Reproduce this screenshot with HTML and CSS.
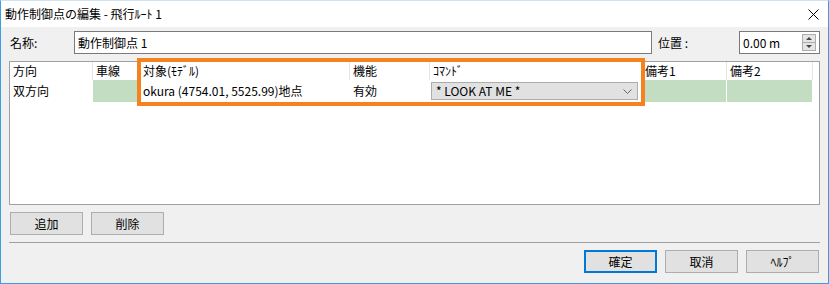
FILE: index.html
```html
<!DOCTYPE html>
<html lang="ja">

<head>
    <meta charset="UTF-8">
    <title>動作制御点の編集</title>
    <link rel="stylesheet" href="styles.css">
</head>

<body>
    <div class="window">
        <div class="titlebar">
            <span class="title">動作制御点の編集 - 飛行ﾙｰﾄ 1</span>
            <svg class="close" width="11" height="11" viewBox="0 0 11 11">
                <path d="M0.5 0.5 L10.5 10.5 M10.5 0.5 L0.5 10.5" stroke="#000" stroke-width="1" fill="none"/>
            </svg>
        </div>

        <div class="content">
            <!-- name / position -->
            <div class="name-row">
                <span class="label-name">名称:</span>
                <div class="textbox name-box">動作制御点 1</div>
                <span class="label-pos">位置 :</span>
                <div class="textbox spin-box">
                    <span>0.00 m</span>
                    <div class="spinner">
                        <div class="spin-up"><span class="tri-up"></span></div>
                        <div class="spin-down"><span class="tri-down"></span></div>
                    </div>
                </div>
            </div>

            <!-- list view -->
            <div class="list">
                <div class="list-row header">
                    <div class="cell">方向</div>
                    <div class="cell">車線</div>
                    <div class="cell">対象(ﾓﾃﾞﾙ)</div>
                    <div class="cell">機能</div>
                    <div class="cell">ｺﾏﾝﾄﾞ</div>
                    <div class="cell">備考1</div>
                    <div class="cell">備考2</div>
                    <div class="cell last"></div>
                </div>
                <div class="list-row data">
                    <div class="cell">双方向</div>
                    <div class="cell green"></div>
                    <div class="cell">okura (4754.01, 5525.99)地点</div>
                    <div class="cell">有効</div>
                    <div class="cell combo-cell">
                        <div class="combo">
                            <span>* LOOK AT ME *</span>
                            <svg width="9" height="5" viewBox="0 0 9 5">
                                <path d="M0.5 0.5 L4.5 4.5 L8.5 0.5" stroke="#666" stroke-width="1" fill="none"/>
                            </svg>
                        </div>
                    </div>
                    <div class="cell green"></div>
                    <div class="cell green"></div>
                    <div class="cell last"></div>
                </div>
                <div class="highlight"></div>
            </div>

            <div class="edit-buttons">
                <button class="btn">追加</button>
                <button class="btn">削除</button>
            </div>

            <div class="separator"></div>

            <div class="footer">
                <button class="btn default">確定</button>
                <button class="btn">取消</button>
                <button class="btn">ﾍﾙﾌﾟ</button>
            </div>
        </div>
    </div>
</body>

</html>
```

FILE: styles.css
```css
* {
    box-sizing: border-box;
}

body {
    margin: 0;
    padding: 0;
    font-family: "Noto Sans CJK JP", "Liberation Sans", sans-serif;
    font-size: 12px;
    color: #000;
}

.window {
    width: 829px;
    height: 284px;
    border: 1px solid #3c9ee0;
    border-top-color: #cfe3f3;
    background-color: #f0f0f0;
    overflow: hidden;
}

.titlebar {
    height: 26px;
    background-color: #fff;
    display: flex;
    align-items: center;
    justify-content: space-between;
    padding: 0 9px 0 4px;
}

.title {
    font-size: 12px;
    line-height: 16px;
}

.close {
    display: block;
    margin-top: 1px;
}

.content {
    padding: 4px 8px 0 8px;
}

.name-row {
    display: flex;
    align-items: center;
    height: 23px;
}

.label-name {
    width: 65px;
    padding-left: 1px;
}

.textbox {
    height: 23px;
    background-color: #fff;
    border: 1px solid #7a7a7a;
    display: flex;
    align-items: center;
    padding-left: 3px;
}

.name-box {
    width: 578px;
}

.label-pos {
    margin-left: 6px;
    width: 81px;
}

.spin-box {
    flex: 1;
    justify-content: space-between;
    padding-right: 3px;
}

.spinner {
    width: 14px;
    height: 17px;
    display: flex;
    flex-direction: column;
    border: 1px solid #adadad;
    background-color: #e5e5e5;
}

.spin-up, .spin-down {
    flex: 1;
    display: flex;
    align-items: center;
    justify-content: center;
}

.spin-up {
    border-bottom: 1px solid #adadad;
}

.tri-up {
    width: 0;
    height: 0;
    border-left: 3px solid transparent;
    border-right: 3px solid transparent;
    border-bottom: 3px solid #444;
}

.tri-down {
    width: 0;
    height: 0;
    border-left: 3px solid transparent;
    border-right: 3px solid transparent;
    border-top: 3px solid #444;
}

.list {
    position: relative;
    margin-top: 7px;
    height: 144px;
    background-color: #fff;
    border: 1px solid #a0a0a0;
}

.list-row {
    display: grid;
    grid-template-columns: 83px 47px 210px 80px 212px 85px 86px 1fr;
}

.list-row.header {
    height: 18px;
}

.list-row.header .cell {
    border-right: 1px solid #e5e5e5;
    padding-left: 3px;
    line-height: 18px;
}

.list-row.header .cell.last {
    border-right: none;
}

.list-row.data {
    height: 22px;
}

.list-row.data .cell {
    padding-left: 3px;
    line-height: 22px;
    border-right: 1px solid #fff;
}

.cell {
    white-space: nowrap;
    overflow: hidden;
}

.cell.green {
    background-color: #c2ddc2;
}

.list-row.data .combo-cell {
    padding: 2px 3px 2px 1px;
}

.combo {
    height: 18px;
    background-color: #e1e1e1;
    border: 1px solid #adadad;
    display: flex;
    align-items: center;
    justify-content: space-between;
    padding: 0 5px 0 4px;
    line-height: 16px;
}

.combo svg {
    display: block;
}

.highlight {
    position: absolute;
    left: 127px;
    top: -4px;
    width: 508px;
    height: 48px;
    border: 4px solid #f5821f;
}

.edit-buttons {
    display: flex;
    gap: 8px;
    margin-top: 7px;
    padding-left: 1px;
}

.btn {
    width: 73px;
    height: 23px;
    padding: 0;
    background-color: #e1e1e1;
    border: 1px solid #adadad;
    font-family: "Noto Sans CJK JP", "Liberation Sans", sans-serif;
    font-size: 12px;
    color: #000;
}

.btn.default {
    border: 2px solid #0078d7;
}

.separator {
    margin-top: 7px;
    height: 1px;
    background-color: #a0a0a0;
}

.footer {
    display: flex;
    justify-content: flex-end;
    gap: 8px;
    margin-top: 7px;
    padding-right: 1px;
}
```
